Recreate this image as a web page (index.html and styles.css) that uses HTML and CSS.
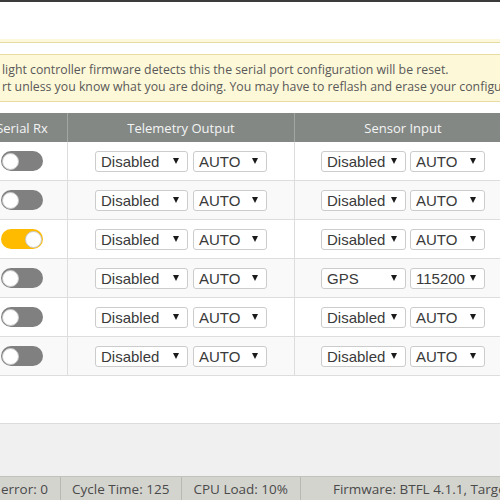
FILE: index.html
```html
<!DOCTYPE html>
<html>
<head>
<meta charset="utf-8">
<link rel="stylesheet" href="styles.css">
</head>
<body>
<div class="topbar"></div>
<div class="prevnote"></div>
<div class="note">
  <div class="line">light controller firmware detects this the serial port configuration will be reset.</div>
  <div class="line">rt unless you know what you are doing. You may have to reflash and erase your configuration if you do.</div>
</div>
<div class="ports">
  <div class="row head">
    <div class="c c1">Serial Rx</div>
    <div class="c c2">Telemetry Output</div>
    <div class="c c3">Sensor Input</div>
  </div>
  <div class="row">
    <div class="c c1"><span class="toggle"><span class="knob"></span></span></div>
    <div class="c c2"><span class="sel w93"><span>Disabled</span><i class="arr"></i></span><span class="sel w74"><span>AUTO</span><i class="arr"></i></span></div>
    <div class="c c3"><span class="sel w85"><span>Disabled</span><i class="arr"></i></span><span class="sel w75"><span>AUTO</span><i class="arr"></i></span></div>
  </div>
  <div class="row">
    <div class="c c1"><span class="toggle"><span class="knob"></span></span></div>
    <div class="c c2"><span class="sel w93"><span>Disabled</span><i class="arr"></i></span><span class="sel w74"><span>AUTO</span><i class="arr"></i></span></div>
    <div class="c c3"><span class="sel w85"><span>Disabled</span><i class="arr"></i></span><span class="sel w75"><span>AUTO</span><i class="arr"></i></span></div>
  </div>
  <div class="row">
    <div class="c c1"><span class="toggle on"><span class="knob"></span></span></div>
    <div class="c c2"><span class="sel w93"><span>Disabled</span><i class="arr"></i></span><span class="sel w74"><span>AUTO</span><i class="arr"></i></span></div>
    <div class="c c3"><span class="sel w85"><span>Disabled</span><i class="arr"></i></span><span class="sel w75"><span>AUTO</span><i class="arr"></i></span></div>
  </div>
  <div class="row">
    <div class="c c1"><span class="toggle"><span class="knob"></span></span></div>
    <div class="c c2"><span class="sel w93"><span>Disabled</span><i class="arr"></i></span><span class="sel w74"><span>AUTO</span><i class="arr"></i></span></div>
    <div class="c c3"><span class="sel w85"><span>GPS</span><i class="arr"></i></span><span class="sel w75"><span>115200</span><i class="arr"></i></span></div>
  </div>
  <div class="row">
    <div class="c c1"><span class="toggle"><span class="knob"></span></span></div>
    <div class="c c2"><span class="sel w93"><span>Disabled</span><i class="arr"></i></span><span class="sel w74"><span>AUTO</span><i class="arr"></i></span></div>
    <div class="c c3"><span class="sel w85"><span>Disabled</span><i class="arr"></i></span><span class="sel w75"><span>AUTO</span><i class="arr"></i></span></div>
  </div>
  <div class="row">
    <div class="c c1"><span class="toggle"><span class="knob"></span></span></div>
    <div class="c c2"><span class="sel w93"><span>Disabled</span><i class="arr"></i></span><span class="sel w74"><span>AUTO</span><i class="arr"></i></span></div>
    <div class="c c3"><span class="sel w85"><span>Disabled</span><i class="arr"></i></span><span class="sel w75"><span>AUTO</span><i class="arr"></i></span></div>
  </div>
</div>
<div class="gap"></div>
<div class="footer-area"></div>
<div class="status">
  <div class="item first">error: 0</div>
  <div class="item">Cycle Time: 125</div>
  <div class="item">CPU Load: 10%</div>
  <div class="item fw">Firmware: BTFL 4.1.1, Target: OMNIBUSF4</div>
</div>
</body>
</html>
```

FILE: styles.css
```css
html, body {
  margin: 0;
  padding: 0;
}
body {
  width: 500px;
  height: 500px;
  overflow: hidden;
  background: #ffffff;
  font-family: "Open Sans", "DejaVu Sans", sans-serif;
}
.topbar {
  height: 2px;
  background: #3b3b3b;
}
.prevnote {
  margin-top: 37px;
  height: 3px;
  background: #fdf8dc;
  border-bottom: 1px solid #e5dba5;
}
.note {
  margin: 11px 0 0 -10px;
  padding: 6px 0 6px 11px;
  background: #fdf8d8;
  border: 1px solid #e8dca4;
  border-right: none;
  font-size: 12.3px;
  line-height: 17px;
  color: #595959;
  white-space: nowrap;
  overflow: hidden;
}
.ports {
  margin: 11px 0 0 -23px;
  width: 534px;
}
.row {
  display: grid;
  grid-template-columns: 90px 227px 217px;
  height: 39px;
  box-sizing: border-box;
  border-bottom: 1px solid #dddddd;
}
.row:nth-child(odd) {
  background: #f9f9f9;
}
.row.head {
  height: 29px;
  background: #838885;
  border-bottom: none;
  color: #f4f4f4;
  font-size: 13px;
}
.c {
  display: flex;
  align-items: center;
  justify-content: center;
  gap: 5px;
}
.c2, .c3 {
  border-left: 1px solid #dddddd;
}
.c3 {
  gap: 4px;
}
.head .c2, .head .c3 {
  border-left: 1px solid #a3a7a4;
}
.toggle {
  display: flex;
  align-items: center;
  box-sizing: border-box;
  width: 42px;
  height: 20px;
  padding: 0 1px;
  border-radius: 10px;
  background: #808080;
}
.toggle.on {
  background: #ffbb00;
  justify-content: flex-end;
}
.knob {
  width: 17px;
  height: 17px;
  box-sizing: border-box;
  border-radius: 50%;
  background: #ffffff;
  border: 1px solid #c8c8c8;
}
.sel {
  display: flex;
  align-items: center;
  justify-content: space-between;
  box-sizing: border-box;
  height: 21px;
  padding: 0 8px 0 5px;
  background: #ffffff;
  border: 1px solid #cccccc;
  border-radius: 3px;
  font-family: "Liberation Sans", Arial, sans-serif;
  font-size: 15px;
  color: #3a3a3a;
}
.w93 { width: 93px; }
.w74 { width: 74px; }
.w85 { width: 85px; }
.w75 { width: 75px; }
.arr {
  width: 0;
  height: 0;
  border-left: 3px solid transparent;
  border-right: 3px solid transparent;
  border-top: 6px solid #1a1a1a;
}
.gap {
  height: 47px;
}
.footer-area {
  height: 52px;
  background: #f0f0f0;
  border-top: 1px solid #dcdcdc;
}
.status {
  display: flex;
  height: 23px;
  align-items: center;
  background: #d4d4cf;
  border-top: 1px solid #c2c2bc;
  font-size: 13.5px;
  color: #4a4a4a;
  white-space: nowrap;
}
.item {
  height: 100%;
  display: flex;
  align-items: center;
  padding: 0 12px 0 11px;
  border-right: 1px solid #b9b9b3;
}
.item.first {
  padding-left: 1px;
}
.item.fw {
  padding-left: 32px;
  border-right: none;
}
```
